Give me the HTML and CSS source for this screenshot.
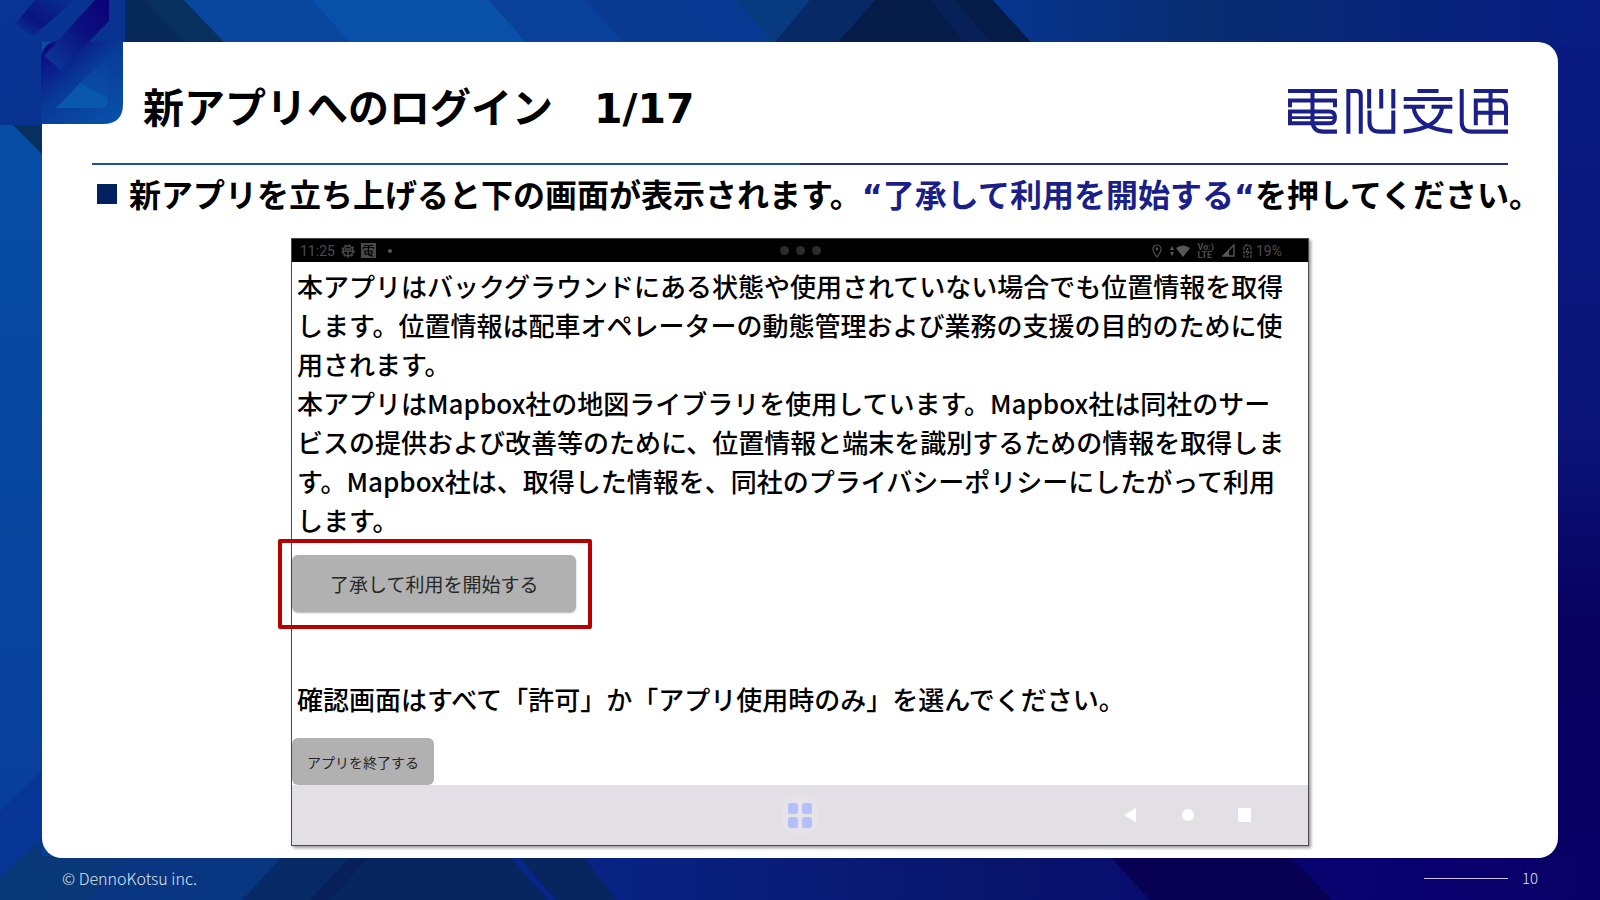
FILE: index.html
```
<!DOCTYPE html>
<html lang="ja">
<head>
<meta charset="utf-8">
<meta name="viewport" content="width=device-width, initial-scale=1">
<title>新アプリへのログイン</title>
<link rel="stylesheet" href="styles.css">
</head>
<body>
<div class="slide">
  <svg class="backdrop" viewBox="0 0 1600 900" preserveAspectRatio="none" aria-hidden="true">
    <defs>
      <linearGradient id="base" x1="0" y1="0" x2="1" y2="1">
        <stop offset="0" stop-color="#0853ab"/><stop offset=".3" stop-color="#083a94"/>
        <stop offset=".55" stop-color="#07207c"/><stop offset=".8" stop-color="#0a0068"/><stop offset="1" stop-color="#080062"/>
      </linearGradient>
      <linearGradient id="side" x1="0" y1="0" x2="0" y2="1">
        <stop offset="0" stop-color="#0850a8"/><stop offset=".5" stop-color="#07479f"/><stop offset="1" stop-color="#083c98"/>
      </linearGradient>
      <linearGradient id="edge" x1="0" y1="0" x2="0" y2="1">
        <stop offset="0" stop-color="#081c82"/><stop offset=".5" stop-color="#0a1276"/><stop offset=".7" stop-color="#08005e"/><stop offset="1" stop-color="#090066"/>
      </linearGradient>
      <linearGradient id="topright" x1="0" y1="0" x2="1" y2="0">
        <stop offset="0" stop-color="#073690"/><stop offset=".35" stop-color="#072c70"/><stop offset="1" stop-color="#081c82"/>
      </linearGradient>
      <linearGradient id="foot" x1="0" y1="0" x2="1" y2="0">
        <stop offset="0" stop-color="#082484"/><stop offset=".4" stop-color="#08156c"/><stop offset=".8" stop-color="#090070"/><stop offset="1" stop-color="#090066"/>
      </linearGradient>
    </defs>
    <rect width="1600" height="900" fill="url(#base)"/>
    <rect width="60" height="900" fill="url(#side)"/>
    <rect x="1540" width="60" height="900" fill="url(#edge)"/>
    <path d="M120 0H184L226 44H120Z" fill="#08305f"/>
    <path d="M120 0H145L186 44H120Z" fill="#072a5a"/>
    <path d="M184 0H489L528 44H226Z" fill="#09479f"/>
    <path d="M312 0H489L528 44H352Z" fill="#0850a8"/>
    <path d="M489 0H585L626 44H528Z" fill="#08409a"/>
    <path d="M585 0H687L724 44H626Z" fill="#083a92"/>
    <path d="M687 0H736L778 44H724Z" fill="#083a94"/>
    <path d="M736 0H810L774 44Z" fill="#083a80"/>
    <path d="M810 0H875L836 44H773Z" fill="#072a66"/>
    <path d="M875 0H993L1033 44H836Z" fill="#061c48"/>
    <path d="M930 0H955L992 44H966Z" fill="#082058"/>
    <path d="M993 0H1600V44H1033Z" fill="url(#topright)"/>
    <path d="M13 125H42V154Z" fill="#08305f"/>
    <path d="M0 811L42 771V900H0Z" fill="#083696"/>
    <path d="M0 878L42 838V856H300V900H0Z" fill="#083878"/>
    <path d="M120 856H283L242 900H90Z" fill="#083680"/>
    <path d="M283 856H352L310 900H242Z" fill="#072a66"/>
    <path d="M352 856H509L548 900H310Z" fill="#07265f"/>
    <path d="M352 856H370L330 900H310Z" fill="#07205a"/>
    <path d="M509 856H518L556 900H548Z" fill="#08268a"/>
    <path d="M518 856H583L616 900H556Z" fill="#07265f"/>
    <path d="M583 856H1600V900H616Z" fill="url(#foot)"/>
    <path d="M1110 856H1290L1332 900H1150Z" fill="#080052"/>
  </svg>

  <main class="card">
    <header class="card-head">
      <h1 class="title">新アプリへのログイン　1/17</h1>
      <svg class="logo" viewBox="87 60 656 134" role="img" aria-label="電脳交通">
        <g fill="none" stroke="#1b2088" stroke-width="12">
          <path d="M87 66H233M93 114V94H227V114M160 60V162M87 127H210Q227 127 227 145T210 162H93V122M160 158Q162 187 192 187H233"/>
          <path d="M93 145H224" stroke-width="8"/>
          <path d="M267 193V66H292Q304 66 304 80V193M329 60V118M365 60V118M401 60V118M330 124V158Q330 187 360 187H401V124"/>
          <path d="M473 66H536M432 90H577M432 113H495M515 113H577M461 113Q468 178 577 187M547 113Q541 178 432 187"/>
          <path d="M605 60V158Q605 187 635 187H743M641 66H743M647 168V94H722Q737 96 737 112V168M691 60V168M647 131H737"/>
        </g>
      </svg>
    </header>

    <p class="lead"><span class="bullet"></span><span>新アプリを立ち上げると下の画面が表示されます。<strong class="accent">“了承して利用を開始する“</strong>を押してください。</span></p>

    <section class="device">
      <div class="statusbar">
        <div class="status-group">
          <span>11:25</span>
          <svg width="14" height="14" viewBox="0 0 14 14"><g fill="none" stroke="#484848"><circle cx="7" cy="7" r="5" stroke-width="1.500"/><path d="M2 7H12M7 7V12M4 5H10" stroke-width="1.500"/><circle cx="7" cy="7" r="6" stroke-width="1.500" stroke-dasharray="2 2"/></g></svg>
          <svg width="15" height="15" viewBox="0 0 15 15"><rect width="15" height="15" fill="#484848"/><path d="M3 2.500H12M2.500 6V4.500H12.500V6M7.500 2V11M4 8H11V11H4ZM7.500 11Q8 13 12 13" fill="none" stroke="#000" stroke-width="1.200"/></svg>
          <span class="dot"></span>
        </div>
        <div class="camera"><i></i><i></i><i></i></div>
        <div class="status-group status-right">
          <svg width="10" height="14" viewBox="0 0 10 14"><path d="M5 13Q1 8 1 5A4 4 0 0 1 9 5Q9 8 5 13Z" fill="none" stroke="#505050" stroke-width="1.200"/><circle cx="5" cy="5" r="1.400" fill="#505050"/></svg>
          <svg width="20" height="14" viewBox="0 0 20 14"><g fill="#585858"><path d="M0 6L2 2L4 6ZM0 8L2 12L4 8ZM6 4Q13 -1 20 4L13 13Z"/></g></svg>
          <span class="volte"><b>Vo:)</b><b>LTE</b></span>
          <svg width="13" height="13" viewBox="0 0 13 13"><path d="M1 12H12V1Z" fill="none" stroke="#585858" stroke-width="1.400"/><path d="M1 12H7V6Z" fill="#585858"/></svg>
          <svg width="9" height="14" viewBox="0 0 9 14"><path d="M3 2V1H6V2H8V13H1V2Z" fill="none" stroke="#585858" stroke-width="1.200" stroke-dasharray="3 1"/><path d="M5 4L3 8H6L4 11" fill="none" stroke="#686868"/></svg>
          <span class="percent">19%</span>
        </div>
      </div>

      <div class="screen">
        <p class="copy">本アプリはバックグラウンドにある状態や使用されていない場合でも位置情報を取得<br>します。位置情報は配車オペレーターの動態管理および業務の支援の目的のために使<br>用されます。<br>本アプリはMapbox社の地図ライブラリを使用しています。Mapbox社は同社のサー<br>ビスの提供および改善等のために、位置情報と端末を識別するための情報を取得しま<br>す。Mapbox社は、取得した情報を、同社のプライバシーポリシーにしたがって利用<br>します。</p>
        <div class="agree">
          <button class="btn btn-large" type="button">了承して利用を開始する</button>
          <span class="highlight"></span>
        </div>
        <p class="copy prompt">確認画面はすべて「許可」か「アプリ使用時のみ」を選んでください。</p>
        <button class="btn btn-small" type="button">アプリを終了する</button>
      </div>

      <nav class="navbar">
        <span></span>
        <button class="nav-btn" type="button" aria-label="アプリ一覧"><svg width="34" height="36" viewBox="0 0 34 36"><rect x="1" y="1" width="32" height="34" rx="8" fill="#e6e2e7" stroke="#ece6ea"/><g fill="#b3c0fa"><rect x="5" y="6" width="10" height="11" rx="3"/><rect x="19" y="6" width="10" height="11" rx="3"/><rect x="5" y="20" width="10" height="11" rx="3"/><rect x="19" y="20" width="10" height="11" rx="3"/></g></svg></button>
        <div class="nav-keys">
          <button class="nav-btn" type="button" aria-label="戻る"><svg width="14" height="14" viewBox="0 0 14 14"><path d="M0 7L12 0V14Z" fill="#fff"/></svg></button>
          <button class="nav-btn" type="button" aria-label="ホーム"><svg width="14" height="14" viewBox="0 0 14 14"><circle cx="7" cy="7" r="6" fill="#fff"/></svg></button>
          <button class="nav-btn" type="button" aria-label="履歴"><svg width="14" height="14" viewBox="0 0 14 14"><rect width="13" height="14" rx="1" fill="#fff"/></svg></button>
        </div>
      </nav>
    </section>
  </main>

  <svg class="badge" width="125" height="125" viewBox="0 0 125 125" aria-hidden="true">
    <defs>
      <linearGradient id="b1" x1="0" y1="0" x2="1" y2="1"><stop offset="0" stop-color="#083696"/><stop offset="1" stop-color="#08308c"/></linearGradient>
      <linearGradient id="b2" x1="0" y1="0" x2=".8" y2="1"><stop offset="0" stop-color="#0c0078"/><stop offset=".5" stop-color="#083a98"/><stop offset="1" stop-color="#0850a8"/></linearGradient>
      <linearGradient id="b3" x1="1" y1="0" x2="0" y2="1"><stop offset="0" stop-color="#0c0078"/><stop offset=".4" stop-color="#0a107e"/><stop offset="1" stop-color="#0a3c9c"/></linearGradient>
      <linearGradient id="b4" x1="0" y1="1" x2="1" y2="0"><stop offset="0" stop-color="#0850a8"/><stop offset="1" stop-color="#084aa4" stop-opacity=".2"/></linearGradient>
      <linearGradient id="b5" x1="1" y1="0" x2="0" y2="1"><stop offset="0" stop-color="#083090"/><stop offset=".6" stop-color="#0a1480"/><stop offset="1" stop-color="#083696"/></linearGradient>
    </defs>
    <path d="M0 0H125V42H42V125H0Z" fill="url(#b1)"/>
    <path d="M41 61Q41 41 61 41H123V104Q123 124 103 124H41Z" fill="url(#b2)"/>
    <path d="M35 0H75L33 36L15 24Z" fill="url(#b5)"/>
    <path d="M89 0H109V21L61 70L44 56L95 0Z" fill="url(#b3)"/>
    <path d="M80 83L56 108H103Q110 106 107 97Z" fill="#0858ae"/>
    <path d="M80 83L109 55V98Z" fill="url(#b4)"/>
  </svg>

  <footer class="foot">
    <span>© DennoKotsu inc.</span>
    <span class="page"><i class="page-line"></i>10</span>
  </footer>
</div>
</body>
</html>
```
FILE: styles.css
```
* {
  box-sizing: border-box;
}

body {
  margin: 0;
  font-family: "Noto Sans CJK JP", sans-serif;
  color: #000;
}

p,
h1 {
  margin: 0;
}

button {
  margin: 0;
  border: 0;
  font-family: inherit;
}

.slide {
  position: relative;
  display: flex;
  flex-direction: column;
  min-height: 100vh;
  padding: 42px 42px 0;
  overflow: hidden;
}

.backdrop {
  position: absolute;
  inset: 0;
  width: 100%;
  height: 100%;
}

.badge {
  position: absolute;
  top: 0;
  left: 0;
}

.card {
  position: relative;
  flex: 1;
  padding-bottom: 12px;
  border-radius: 20px;
  background: #fff;
}

.card-head {
  display: flex;
  align-items: center;
  justify-content: space-between;
  height: 123px;
  margin: 0 50px;
  padding: 12px 0 0 51px;
  border-bottom: 2px solid;
  border-image: linear-gradient(90deg, #1c4fa8 50%, #24307f 50%) 1;
}

.title {
  font-family: "DejaVu Sans", "Noto Sans CJK JP", sans-serif;
  font-size: 41px;
  line-height: 60px;
  font-weight: 700;
}

.logo {
  width: 220px;
  height: 45px;
  margin-top: 6px;
}

.lead {
  display: flex;
  align-items: center;
  gap: 12px;
  height: 46px;
  margin: 6px 0 21px 55px;
  font-size: 32px;
  line-height: 46px;
  font-weight: 700;
  white-space: nowrap;
}

.bullet {
  width: 20px;
  height: 20px;
  background: #002060;
}

.accent {
  font-family: "DejaVu Sans", "Noto Sans CJK JP", sans-serif;
  font-weight: 700;
  color: #1b1f87;
}

.device {
  width: 68%;
  max-width: 1018px;
  margin: 0 auto;
  border: 1px solid #4a4a4a;
  background: #fff;
  box-shadow: 2px 2px 3px rgba(0, 0, 0, 0.4);
}

.statusbar {
  display: grid;
  grid-template-columns: 1fr auto 1fr;
  align-items: center;
  height: 23px;
  padding: 0 26px 0 8px;
  background: #000;
  color: #4c4c4c;
  font-family: Roboto, sans-serif;
  font-size: 14px;
}

.status-group {
  display: flex;
  align-items: center;
  gap: 6px;
}

.status-right {
  justify-content: flex-end;
  gap: 8px;
}

.percent {
  margin-left: -4px;
}

.dot {
  width: 4px;
  height: 4px;
  margin-left: 6px;
  border-radius: 50%;
  background: #555;
}

.camera {
  display: flex;
  gap: 7px;
  padding-left: 18px;
}

.camera i {
  width: 9px;
  height: 9px;
  border-radius: 50%;
  background: #2c2c2c;
}

.volte {
  display: flex;
  flex-direction: column;
  font-size: 9px;
  line-height: 8px;
}

.screen {
  padding-top: 4px;
}

.copy {
  padding-left: 5px;
  font-size: 26px;
  line-height: 39px;
  font-weight: 500;
  white-space: nowrap;
}

.agree {
  position: relative;
  width: fit-content;
  margin: 16px 0 67px;
}

.btn {
  display: block;
  border-radius: 6px;
  background: #b1b1b1;
  color: #262626;
  box-shadow: 0 1px 2px rgba(0, 0, 0, 0.3);
}

.btn-large {
  height: 57px;
  padding: 0 38px;
  font-size: 19px;
}

.btn-small {
  height: 47px;
  margin-top: 20px;
  padding: 0 15px;
  font-size: 14px;
  box-shadow: none;
}

.highlight {
  position: absolute;
  inset: -16px -16px -17px -14px;
  border: 4px solid #b90000;
  border-radius: 2px;
  pointer-events: none;
}

.navbar {
  display: grid;
  grid-template-columns: 1fr auto 1fr;
  align-items: center;
  height: 60px;
  padding: 0 56px;
  background: #e2e0e5;
}

.nav-btn {
  padding: 0;
  background: none;
}

.nav-btn svg {
  display: block;
}

.nav-keys {
  display: flex;
  justify-content: flex-end;
  gap: 43px;
}

.foot {
  position: relative;
  display: flex;
  align-items: center;
  justify-content: space-between;
  height: 42px;
  padding: 0 20px 2px;
  color: #dfe4f4;
  font-size: 16px;
  line-height: 24px;
  font-weight: 300;
}

.page {
  display: flex;
  align-items: center;
  gap: 14px;
  font-size: 15px;
}

.page-line {
  width: 84px;
  height: 1px;
  background: #c8c6e4;
}
```
